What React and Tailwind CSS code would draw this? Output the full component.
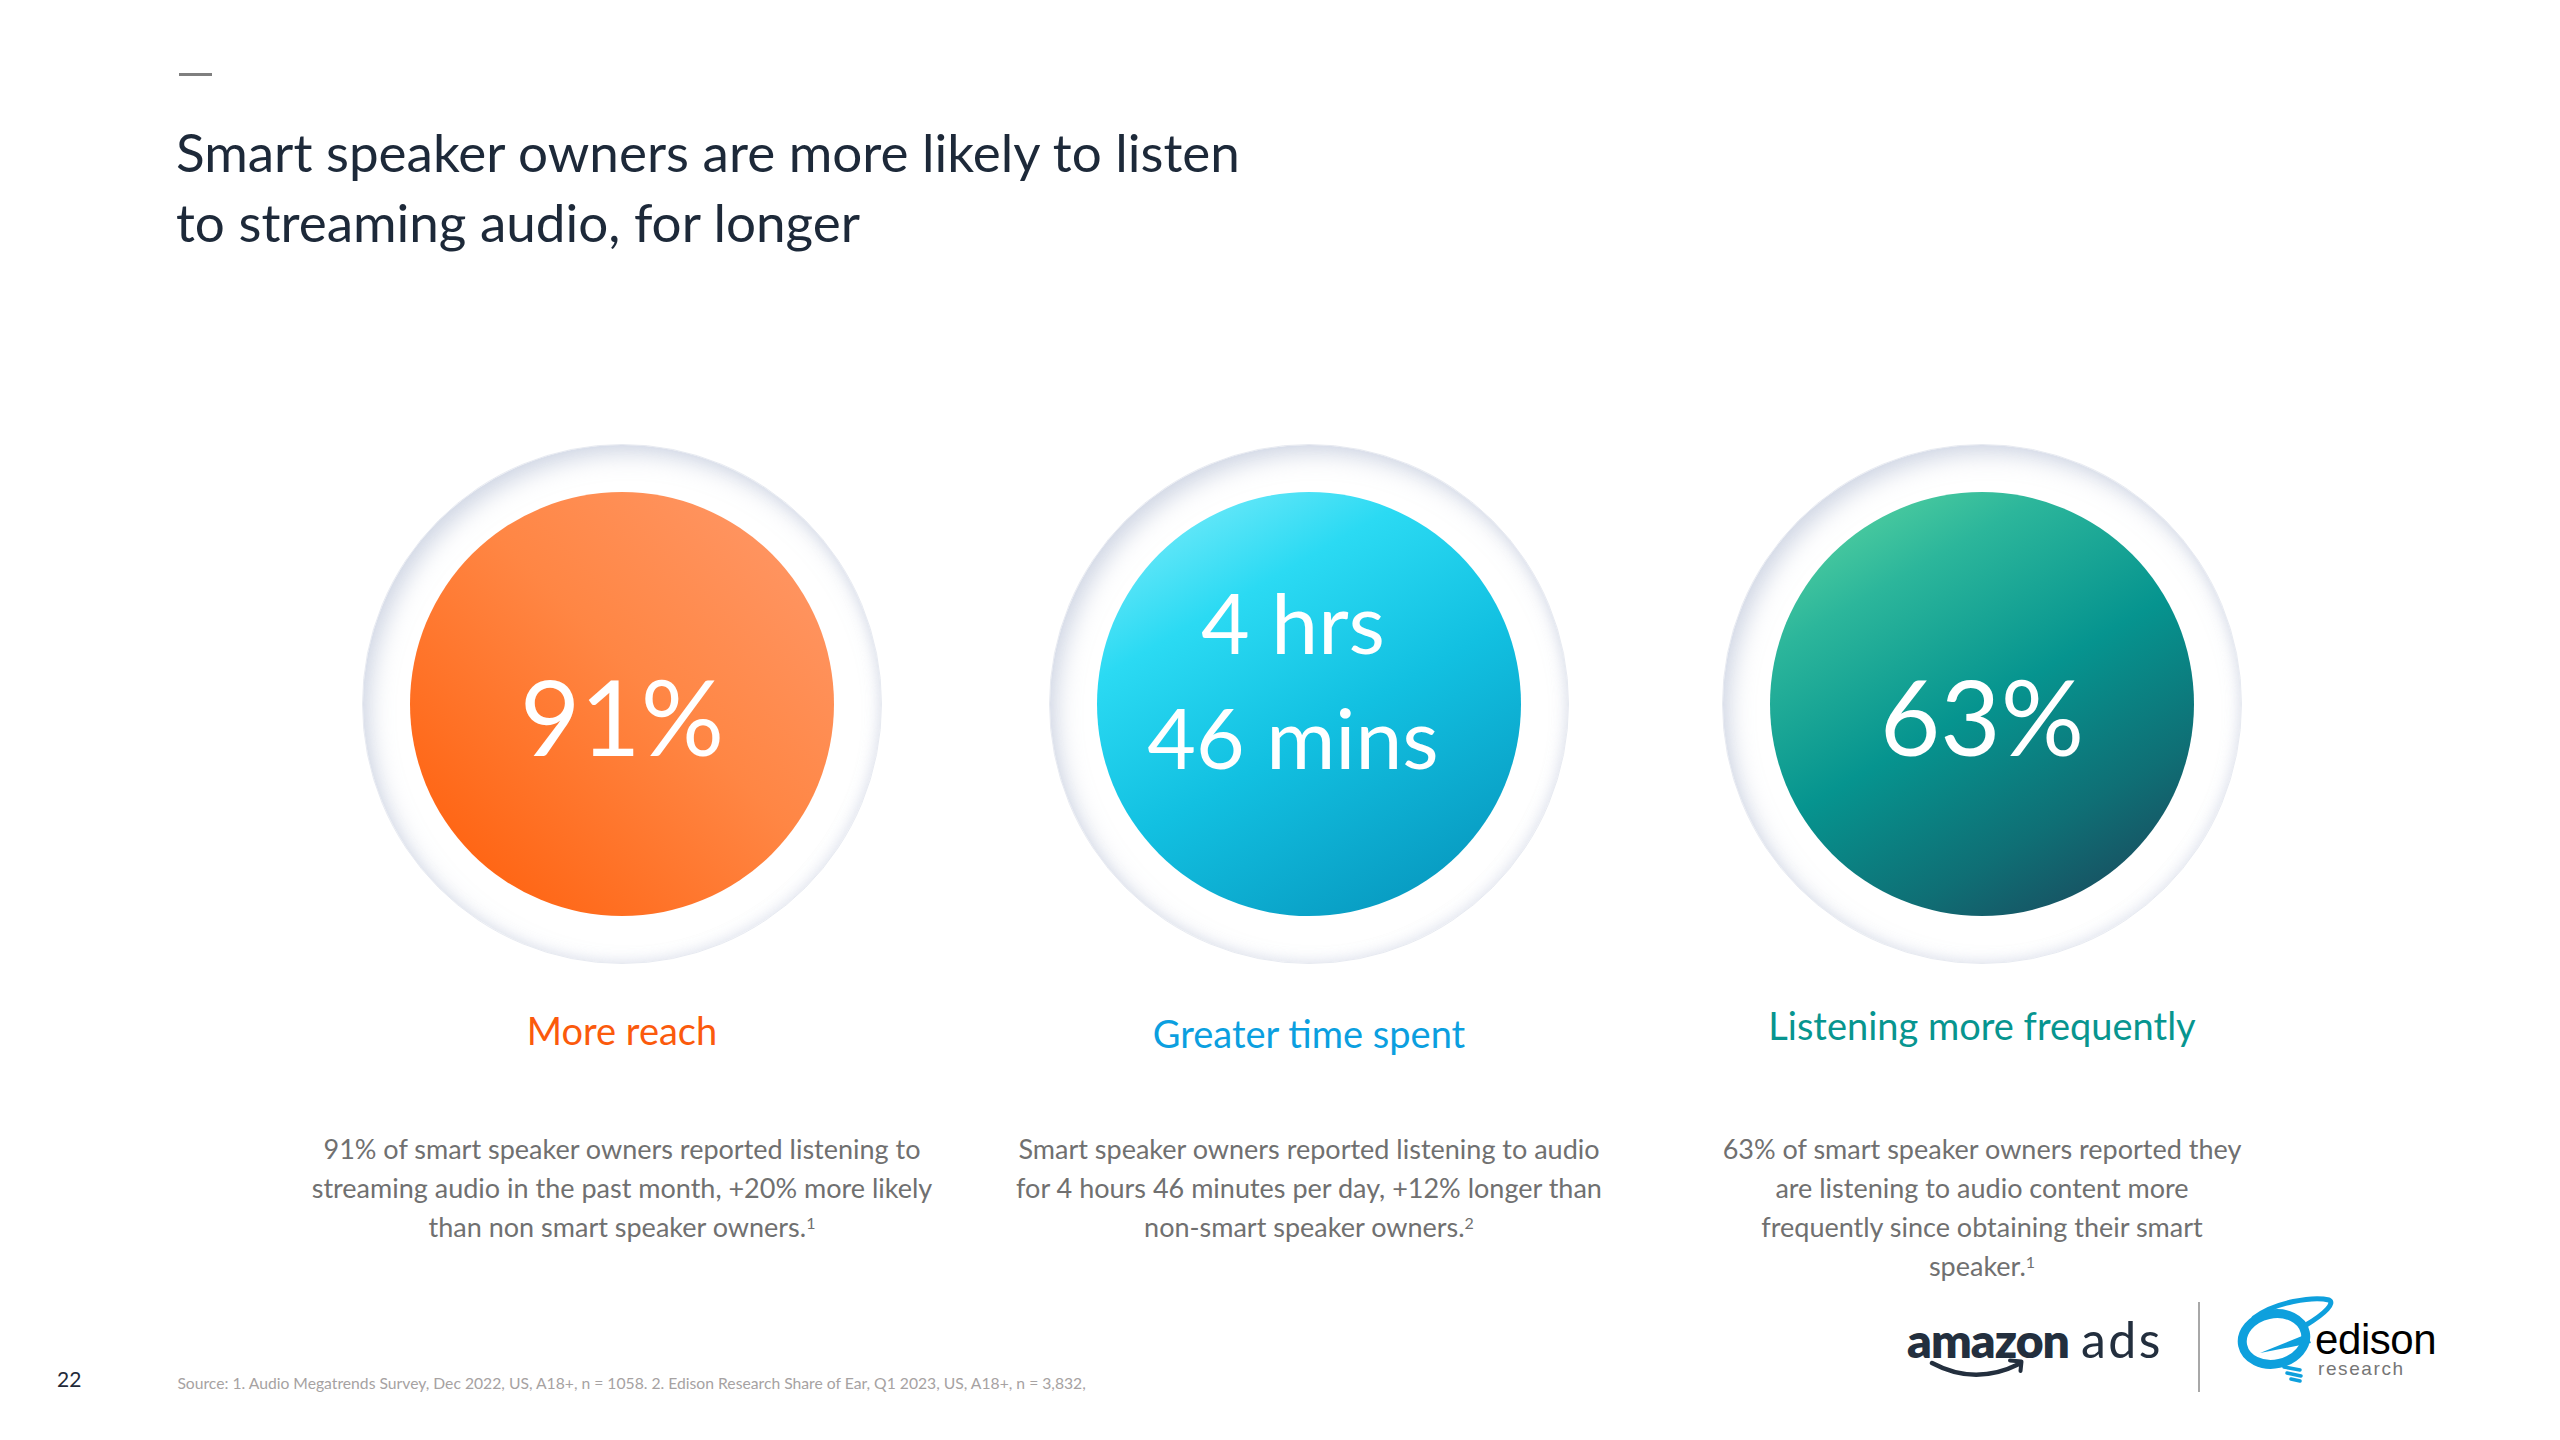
import React from 'react';

const stats = [
  {
    key: 'reach',
    value: <span className="mt-[24px] text-[104px] leading-none">91%</span>,
    fill: 'bg-[linear-gradient(225deg,#ff9a6c_0%,#ff8644_45%,#ff5b05_100%)]',
    label: 'More reach',
    labelClass: 'pt-[42px] text-[#fb5a0c]',
    lines: ['91% of smart speaker owners reported listening to', 'streaming audio in the past month, +20% more likely', 'than non smart speaker owners.'],
    note: '1',
  },
  {
    key: 'time',
    value: (
      <span className="mb-[50px] mr-[32px] text-[84px] leading-[115px] text-center">
        4 hrs
        <br />
        46 mins
      </span>
    ),
    fill: 'bg-[linear-gradient(150deg,#8af0fc_0%,#2bdaf3_28%,#12c0e1_55%,#058fb7_100%)]',
    label: 'Greater time spent',
    labelClass: 'pt-[45px] text-[#0b9fe0]',
    lines: ['Smart speaker owners reported listening to audio', 'for 4 hours 46 minutes per day, +12% longer than', 'non-smart speaker owners.'],
    note: '2',
  },
  {
    key: 'freq',
    value: <span className="mt-[24px] text-[104px] leading-none">63%</span>,
    fill: 'bg-[linear-gradient(150deg,#64dca2_0%,#2cb69b_24%,#06948f_50%,#0f6f75_74%,#1e3d55_100%)]',
    label: 'Listening more frequently',
    labelClass: 'pt-[37px] text-[#07958f]',
    lines: ['63% of smart speaker owners reported they', 'are listening to audio content more', 'frequently since obtaining their smart', 'speaker.'],
    note: '1',
  },
];

function AmazonAdsLogo() {
  return (
    <div className="relative mt-[6px] pb-[22px] flex items-baseline text-[#232f3e]">
      <span className="text-[48px] leading-none font-extrabold tracking-[-0.02em]">amazon</span>
      <span className="ml-[12px] text-[50px] leading-none tracking-[0.05em]">ads</span>
      <svg className="absolute left-[22px] top-[44px]" width="100" height="24" viewBox="0 0 100 24" fill="none">
        <path d="M3 5 Q46 28 90 6" stroke="#232f3e" strokeWidth="4.5" strokeLinecap="round" />
        <path d="M81 2.5 L92.5 3.5 L91.5 13" stroke="#232f3e" strokeWidth="4" strokeLinecap="round" strokeLinejoin="round" />
      </svg>
    </div>
  );
}

function EdisonLogo() {
  return (
    <div className="h-[100px] w-[204px] flex">
      <svg className="shrink-0 overflow-visible" width="81" height="100" viewBox="0 0 81 100" fill="none">
        <ellipse cx="40" cy="42" rx="32" ry="25" stroke="#0ea0dd" strokeWidth="9" transform="rotate(-12 40 42)" />
        <polygon points="26,56 73,37 77,46" fill="#0ea0dd" />
        <path d="M20 21 C40 5 80 -1 95 3 C101 6 92 16 72 28" stroke="#0ea0dd" strokeWidth="5" strokeLinecap="round" />
        <path d="M50 70 L66 73 M53 76 L67 79 M57 82 L66 84" stroke="#0ea0dd" strokeWidth="3.5" strokeLinecap="round" />
      </svg>
      <div className="pt-[23px] flex flex-col font-['Liberation_Sans',Arial,sans-serif]">
        <span className="text-[42px] leading-[40px] text-black tracking-[-0.01em]">edison</span>
        <span className="ml-[3px] text-[19px] leading-[18px] tracking-[1.6px] text-[#767676]">research</span>
      </div>
    </div>
  );
}

export default function App() {
  return (
    <div className="w-[2560px] h-[1440px] bg-white flex flex-col overflow-hidden font-['Lato','Noto_Sans',sans-serif]">
      {/* 標題 */}
      <div className="pl-[176px] pt-[73px]">
        <div className="ml-[3px] w-[33px] h-[3px] bg-[#7f7f7f]" />
        <h1 className="mt-[41px] text-[53px] leading-[70px] text-[#1d2939]">
          Smart speaker owners are more likely to listen
          <br />
          to streaming audio, for longer
        </h1>
      </div>

      {/* 三個指標 */}
      <div className="mt-[187px] ml-[282px] grid grid-cols-[680px_694px_652px]">
        {stats.map((s) => (
          <div key={s.key} className="flex flex-col items-center">
            <div className="w-[520px] h-[520px] rounded-full bg-white border border-[#e7eaf1] shadow-[inset_7px_9px_22px_rgba(168,180,206,0.5),inset_-3px_-3px_12px_rgba(205,212,228,0.35)] flex items-center justify-center">
              <div className={`w-[424px] h-[424px] rounded-full ${s.fill} flex items-center justify-center text-white`}>
                {s.value}
              </div>
            </div>
            <div className="h-[165px] w-full flex justify-center">
              <div className={`text-[38px] leading-[48px] whitespace-nowrap ${s.labelClass}`}>{s.label}</div>
            </div>
            <p className="text-center text-[27px] leading-[39px] text-[#707070] whitespace-nowrap">
              {s.lines.map((line, i) => (
                <React.Fragment key={i}>
                  {line}
                  {i === s.lines.length - 1 ? <sup className="text-[16px]">{s.note}</sup> : <br />}
                </React.Fragment>
              ))}
            </p>
          </div>
        ))}
      </div>

      {/* 頁尾 */}
      <div className="mt-auto flex items-end justify-between pl-[57px] pr-[122px] pb-[48px]">
        <div className="flex items-end">
          <span className="mb-[3px] text-[21px] leading-none text-[#1f2a3a]">22</span>
          <span className="ml-[96px] text-[15.7px] leading-none text-[#a6a2a2]">
            Source: 1. Audio Megatrends Survey, Dec 2022, US, A18+, n = 1058. 2. Edison Research Share of Ear, Q1 2023, US, A18+, n = 3,832,
          </span>
        </div>
        <div className="flex items-center h-[90px]">
          <AmazonAdsLogo />
          <div className="ml-[35px] mr-[34px] w-[2px] h-[90px] bg-[#a8a8a8]" />
          <EdisonLogo />
        </div>
      </div>
    </div>
  );
}
